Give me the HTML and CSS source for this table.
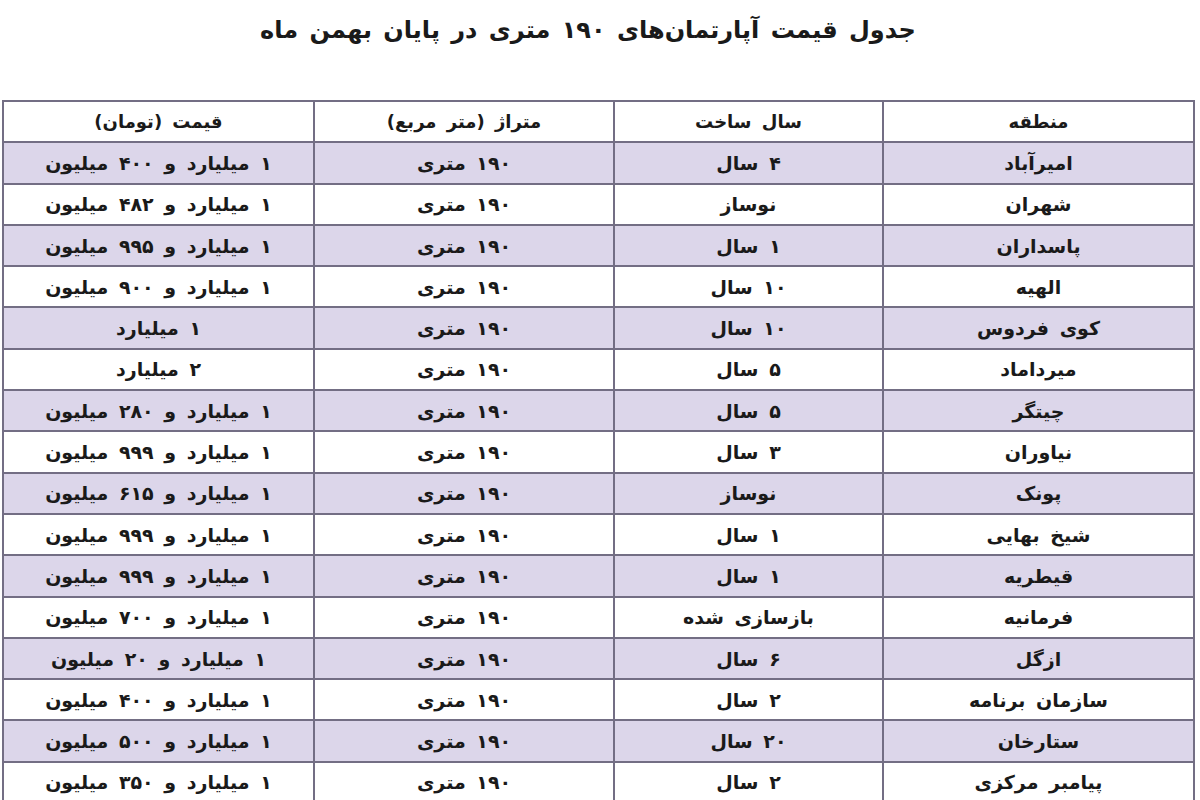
FILE: index.html
```html
<!DOCTYPE html>
<html lang="fa" dir="rtl">
<head>
<meta charset="utf-8">
<title>جدول قیمت</title>
<link rel="stylesheet" href="styles.css">
</head>
<body>
<div class="page">
  <h1 class="title">جدول قیمت آپارتمان‌های ۱۹۰ متری در پایان بهمن ماه</h1>
  <table class="prices">
    <colgroup>
      <col class="c-region"><col class="c-year"><col class="c-area"><col class="c-price">
    </colgroup>
    <thead>
      <tr><th>منطقه</th><th>سال ساخت</th><th>متراژ (متر مربع)</th><th>قیمت (تومان)</th></tr>
    </thead>
    <tbody>
      <tr class="alt"><td>امیرآباد</td><td>۴ سال</td><td>۱۹۰ متری</td><td>۱ میلیارد و ۴۰۰ میلیون</td></tr>
      <tr><td>شهران</td><td>نوساز</td><td>۱۹۰ متری</td><td>۱ میلیارد و ۴۸۲ میلیون</td></tr>
      <tr class="alt"><td>پاسداران</td><td>۱ سال</td><td>۱۹۰ متری</td><td>۱ میلیارد و ۹۹۵ میلیون</td></tr>
      <tr><td>الهیه</td><td>۱۰ سال</td><td>۱۹۰ متری</td><td>۱ میلیارد و ۹۰۰ میلیون</td></tr>
      <tr class="alt"><td>کوی فردوس</td><td>۱۰ سال</td><td>۱۹۰ متری</td><td>۱ میلیارد</td></tr>
      <tr><td>میرداماد</td><td>۵ سال</td><td>۱۹۰ متری</td><td>۲ میلیارد</td></tr>
      <tr class="alt"><td>چیتگر</td><td>۵ سال</td><td>۱۹۰ متری</td><td>۱ میلیارد و ۲۸۰ میلیون</td></tr>
      <tr><td>نیاوران</td><td>۳ سال</td><td>۱۹۰ متری</td><td>۱ میلیارد و ۹۹۹ میلیون</td></tr>
      <tr class="alt"><td>پونک</td><td>نوساز</td><td>۱۹۰ متری</td><td>۱ میلیارد و ۶۱۵ میلیون</td></tr>
      <tr><td>شیخ بهایی</td><td>۱ سال</td><td>۱۹۰ متری</td><td>۱ میلیارد و ۹۹۹ میلیون</td></tr>
      <tr class="alt"><td>قیطریه</td><td>۱ سال</td><td>۱۹۰ متری</td><td>۱ میلیارد و ۹۹۹ میلیون</td></tr>
      <tr><td>فرمانیه</td><td>بازسازی شده</td><td>۱۹۰ متری</td><td>۱ میلیارد و ۷۰۰ میلیون</td></tr>
      <tr class="alt"><td>ازگل</td><td>۶ سال</td><td>۱۹۰ متری</td><td>۱ میلیارد و ۲۰ میلیون</td></tr>
      <tr><td>سازمان برنامه</td><td>۲ سال</td><td>۱۹۰ متری</td><td>۱ میلیارد و ۴۰۰ میلیون</td></tr>
      <tr class="alt"><td>ستارخان</td><td>۲۰ سال</td><td>۱۹۰ متری</td><td>۱ میلیارد و ۵۰۰ میلیون</td></tr>
      <tr><td>پیامبر مرکزی</td><td>۲ سال</td><td>۱۹۰ متری</td><td>۱ میلیارد و ۳۵۰ میلیون</td></tr>
    </tbody>
  </table>
</div>
</body>
</html>
```

FILE: styles.css
```css
html, body {
  margin: 0;
  padding: 0;
  background: #ffffff;
}
body {
  font-family: "DejaVu Sans", "Noto Sans", sans-serif;
  color: #1a1a1a;
  overflow: hidden;
}
.page {
  width: 1200px;
  height: 800px;
  overflow: hidden;
  padding: 0 5px;
  box-sizing: border-box;
}
.title {
  margin: 0;
  height: 100px;
  padding: 13px 24px 0 0;
  box-sizing: border-box;
  text-align: center;
  font-size: 24px;
  font-weight: bold;
  line-height: 34px;
  word-spacing: 3px;
}
.prices {
  width: 1191px;
  border-collapse: collapse;
  table-layout: fixed;
  border: 2px solid #736e84;
}
.c-region { width: 311px; }
.c-year { width: 269px; }
.c-area { width: 300px; }
.c-price { width: 311px; }
.prices th,
.prices td {
  border: 2px solid #736e84;
  height: 39.3px;
  padding: 0;
  text-align: center;
  vertical-align: middle;
  font-size: 19px;
  font-weight: bold;
  word-spacing: 4px;
}
.prices th {
  background: #ffffff;
  font-size: 18px;
}
.prices tr.alt td {
  background: #dcd6ea;
}
```
